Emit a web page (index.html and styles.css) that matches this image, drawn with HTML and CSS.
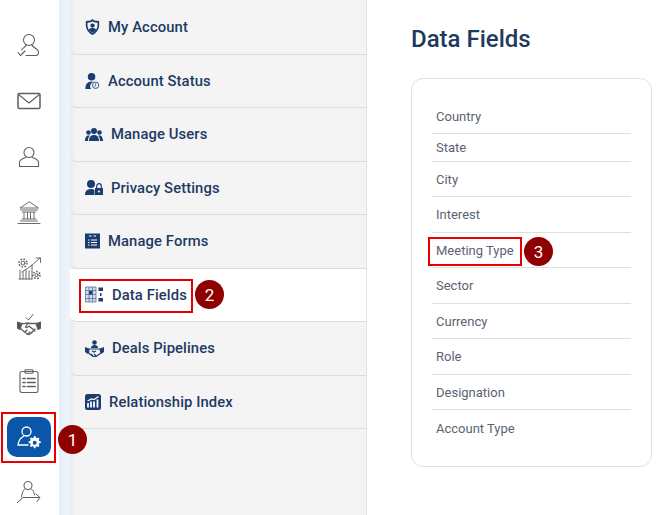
FILE: index.html
```html
<!DOCTYPE html>
<html lang="en">
<head>
<meta charset="utf-8">
<title>Data Fields</title>
<link rel="stylesheet" href="styles.css">
</head>
<body>
<div class="app">
  <nav class="rail">
    <a class="rail-item"><svg viewBox="0 0 24 24" class="ri"><circle cx="12" cy="7" r="5.500"/><path d="M9 12c-.5 2-3 3-4.500 5M15 12c.5 2 4 3 6 5.500 1.500 2.500 0 5-2.500 5H9M1 19.500l2.500 3 4.500-4.500"/></svg></a>
    <a class="rail-item"><svg viewBox="0 0 24 24" class="ri"><rect x="1" y="4.500" width="22" height="15" rx="1.200" stroke-width="1.500"/><path d="M1.500 5.500L12 14l10.500-8.500"/></svg></a>
    <a class="rail-item"><svg viewBox="0 0 24 24" class="ri"><circle cx="12" cy="7.500" r="5"/><path d="M8.500 12.500c-3 1-5.500 2-6 4.500v4.500h19V17c-.5-2.500-3-3.500-6-4.500"/></svg></a>
    <a class="rail-item"><svg viewBox="0 0 24 24" class="ri lt"><path d="M12 1L3 7h18zM3.500 9h17M5.500 11h13M7 11.500v6M10.500 11.500v6M13.500 11.500v6M17 11.500v6M5 18h14M3.500 20h17M1 22.500h22"/></svg></a>
    <a class="rail-item"><svg viewBox="0 0 24 24" class="ri lt"><circle cx="6" cy="6" r="2"/><circle class="teeth" cx="6" cy="6" r="4"/><path d="M3 13v9M6 15v7M9 13v9M12 14v8M15 8v14M2 22h13M5 15l9-6 9-8M19 1h4.500v4.500"/><circle cx="19.500" cy="18" r="1.600"/><circle class="teeth" cx="19.500" cy="18" r="3.500"/></svg></a>
    <a class="rail-item"><svg viewBox="0 0 24 24" class="ri"><path d="M9 4.500l2.500 2.500L16 1.500" stroke-width="1"/><path class="fill" d="M0 9l5 1.500-2 6L0 15zM24 9l-5 1.500 2 6 3-1.500z"/><path d="M5 10.500c2 .5 4-.5 6-.5l2 .5 6 0M4 16l6 5 2 .5 2-1 4-4.500M10.500 11l-2 3c1 1 2.500 .5 3.500-1l6 5M8 19l2-2M11 21l2-2" stroke-width="1.300"/></svg></a>
    <a class="rail-item"><svg viewBox="0 0 24 24" class="ri"><rect x="3" y="2.500" width="18" height="21" rx="2"/><rect x="8" y=".7" width="8" height="3.500" rx=".8"/><path d="M6 9.500h2M10.500 9.500h7.500M6 13.500h2M10.500 13.500h7.500M6 17.500h2M10.500 17.500h7.500" stroke-width="1.700"/></svg></a>
    <a class="rail-item"><span class="tile"><svg viewBox="0 0 24 24" class="ti"><circle cx="9.500" cy="6.500" r="4.500"/><path d="M6.500 11.500C3 13 1.500 16 1 20h10"/><path class="gear" d="M17 11l1.400.1.400 1.500 1.200.6 1.400-.7 1 1-.7 1.400.6 1.200 1.500.4v1.400l-1.500.4-.6 1.200.7 1.400-1 1-1.400-.7-1.200.6-.4 1.500h-1.400l-.4-1.500-1.200-.6-1.400.7-1-1 .7-1.400-.6-1.200-1.500-.4v-1.400l1.500-.4.6-1.200-.7-1.400 1-1 1.400.7 1.200-.6zm.7 4.700a2 2 0 100 4 2 2 0 000-4z"/></svg></span></a>
    <a class="rail-item"><svg viewBox="0 0 24 24" class="ri"><circle cx="11" cy="4.500" r="4"/><path d="M7.500 8C5.500 10 5 13 4.500 16M14.500 8c2 1.500 2.500 3.500 3 6M0 22l6-5.500h16.500M19 13l4 3.500-3 4" stroke-width="1"/></svg></a>
  </nav>
  <div class="rail-edge"></div>
  <aside class="menu">
    <a class="menu-item"><svg viewBox="0 0 15 17" class="mi w15"><path d="M7.500 0l2 1.500 5 .5c.5 6 0 11-7 15C.5 13 0 8 .5 2l5-.5z"/><path class="cut" d="M7.500 2.500l1.500 1 3.800.4c.3 4.500-.5 8-5.300 11-4.800-3-5.600-6.500-5.300-11L6 3.500z"/><circle cx="7.500" cy="7" r="2.300"/><path d="M3.500 12c.5-2 2-2.500 4-2.500s3.500.5 4 2.500c-1 1-2.500 2-4 2.500-1.500-.5-3-1.500-4-2.500z"/></svg><span>My Account</span></a>
    <a class="menu-item"><svg viewBox="0 0 15 17" class="mi w15"><circle cx="6.500" cy="4" r="4"/><path d="M0 17c0-5 2-8 6.500-8 1 0 2 .2 3 .6A4.500 4.500 0 006 17z"/><circle class="ring" cx="10.800" cy="13" r="3.400"/><path class="ringi" d="M10.800 11v2.500l-1 1.200"/></svg><span>Account Status</span></a>
    <a class="menu-item"><svg viewBox="0 0 18 13" class="mi w18"><circle cx="9" cy="3" r="3"/><circle cx="3.500" cy="4.500" r="2.300"/><circle cx="14.500" cy="4.500" r="2.300"/><path d="M4 13c0-4 2-6 5-6s5 2 5 6z"/><path d="M0 13c0-3 1-5.500 3.500-5.500 .5 0 1 .1 1.300.3C3.500 9 3 11 3 13zM18 13c0-3-1-5.500-3.500-5.500-.5 0-1 .1-1.300.3 1.300 1.200 1.800 3.200 1.800 5.200z"/></svg><span>Manage Users</span></a>
    <a class="menu-item"><svg viewBox="0 0 18 15" class="mi w18"><circle cx="6" cy="4" r="4"/><path d="M0 15c0-4 2-6 6-6 1.500 0 2.500 .3 3.500 1v5z"/><path d="M10 8h8v7h-8z"/><path class="lock" d="M11.700 8V6a2.300 2.300 0 014.600 0v2"/><circle class="cut" cx="14" cy="11.500" r="1.100"/></svg><span>Privacy Settings</span></a>
    <a class="menu-item"><svg viewBox="0 0 15 15" class="mi w15"><path d="M0 0h15v15H0z"/><path class="cutline" d="M4 2.500h2.500M8.500 2.500H11M3 6.500h1.500M6 6.500h6M3 9h1.500M6 9h6M3 11.500h1.500M6 11.500h6"/></svg><span>Manage Forms</span></a>
    <a class="menu-item active"><svg viewBox="0 0 19 16" class="mi w19"><path class="tbl" d="M.5.500h10.500v15H.5zM.5 4h10.500M.5 8h10.500M.5 12h10.500M4 .5v15M7.500.5v15"/><path class="sq" d="M4 4.500h3.500V8H4zM13.500 1h4.500v3.500h-4.500zM13.500 11.500h4.500V15h-4.500zM15 6.500h1.500v3H15z"/></svg><span>Data Fields</span></a>
    <a class="menu-item"><svg viewBox="0 0 19 17" class="mi w19"><circle cx="9.500" cy="2.500" r="2.300"/><path d="M6 8c0-2 1.500-3 3.500-3s3.500 1 3.500 3z"/><path d="M0 7l4 1.500L3 14l-3-2zM19 7l-4 1.500 1 5.500 3-2z"/><path class="lock" d="M4 9h11l1 4-5 3.500H8L3.500 13zM7 11l2 1 2-1M6 14l2 2M9 14l2 2" /></svg><span>Deals Pipelines</span></a>
    <a class="menu-item"><svg viewBox="0 0 16 16" class="mi w16"><rect width="16" height="16" rx="2.500"/><path class="cutline wide" d="M3 13.500V9M6 13.500V7.500M9 13.500V7.500M12.500 13.500V5.500"/><path class="cutline" d="M2.500 7l4-2 2.500 .5 4.500-3"/></svg><span>Relationship Index</span></a>
    <i class="callout-box box-2"></i>
    <b class="badge badge-2">2</b>
  </aside>
  <main class="main">
    <h1 class="title">Data Fields</h1>
    <section class="card">
      <ul class="fields">
        <li class="field short-a">Country</li>
        <li class="field short-b">State</li>
        <li class="field">City</li>
        <li class="field tall">Interest</li>
        <li class="field">Meeting Type</li>
        <li class="field tall">Sector</li>
        <li class="field">Currency</li>
        <li class="field tall">Role</li>
        <li class="field">Designation</li>
        <li class="field tall last">Account Type</li>
      </ul>
    </section>
    <i class="callout-box box-3"></i>
    <b class="badge badge-3">3</b>
  </main>
  <i class="callout-box box-1"></i>
  <b class="badge badge-1">1</b>
</div>
</body>
</html>
```

FILE: styles.css
```css
* { box-sizing: border-box; }
html, body { margin: 0; padding: 0; }
body { font-family: Roboto, "Liberation Sans", sans-serif; background: #fff; overflow: hidden; }

.app { position: relative; display: flex; width: 656px; height: 515px; overflow: hidden; }

.rail { width: 59px; flex: none; padding: 17px 1px 0 0; display: flex; flex-direction: column; }
.rail-item { height: 56px; flex: none; display: flex; align-items: center; justify-content: center; }
.ri { width: 24px; height: 24px; fill: none; stroke: #5f5f5f; stroke-width: 1.100; stroke-linecap: round; stroke-linejoin: round; }
.ri.lt { stroke: #5a5a5a; stroke-width: .9; }
.ri .fill { fill: #555; }
.ri .teeth { stroke-width: 1.500; stroke-dasharray: 1.500 1.640; stroke-linecap: butt; }
.tile { width: 44px; height: 40px; border-radius: 10px; background: #0a56a8; display: flex; align-items: center; justify-content: center; }
.ti { width: 24px; height: 24px; fill: none; stroke: #fff; stroke-width: 1.300; stroke-linecap: round; }
.ti .gear { fill: #fff; stroke: none; fill-rule: evenodd; }

.rail-edge { width: 11px; flex: none; background: linear-gradient(90deg, #e6eef8, #f0f4fa); }

.menu { width: 297px; flex: none; padding-top: 1px; background: linear-gradient(90deg, #ebecee, #f4f4f5 7px); border-right: 1px solid #e3e3e3; position: relative; }
.menu-item { height: 53.500px; display: flex; align-items: center; gap: 8px; padding-left: 15px; border-bottom: 1px solid #dcdcdc; border-bottom-left-radius: 6px; color: #1e3a63; font-size: 14.800px; font-weight: 500; letter-spacing: .1px; }
.menu-item.active { background: #fff; }
.mi { flex: none; fill: #1a3c6e; }
.w15 { width: 15px; height: 16px; }
.w16 { width: 16px; height: 16px; }
.w18 { width: 18px; height: 15px; }
.w19 { width: 19px; height: 17px; }
.mi .cut { fill: #f4f4f5; }
.mi .ring { fill: #f4f4f5; stroke: #1a3c6e; stroke-width: .9; }
.mi .ringi { fill: none; stroke: #1a3c6e; stroke-width: .8; }
.mi .cutline { fill: none; stroke: #fff; stroke-width: 1.200; }
.mi .cutline.wide { stroke-width: 1.800; }
.mi .lock { fill: none; stroke: #1a3c6e; stroke-width: 1.200; }
.mi .tbl { fill: #d3dbe6; stroke: #5a739a; stroke-width: .8; }
.mi .sq { fill: #1f3f70; }

.main { flex: 1; position: relative; padding: 24px 0 0 44px; }
.title { margin: 0 0 23px; height: 31px; font-size: 24px; line-height: 31px; font-weight: 500; color: #1f3a5c; }
.card { width: 241px; height: 389px; border: 1px solid #e0e0e0; border-radius: 12px; padding: 21px 20px 0; }
.fields { list-style: none; margin: 0; padding: 0; }
.field { height: 35.500px; border-bottom: 1px solid #dedede; padding-left: 4px; display: flex; align-items: center; font-size: 13px; color: #5a6472; }
.field.short-a { height: 34px; padding-bottom: 1px; }
.field.short-b { height: 27.900px; }
.field.last { border-bottom: 0; }

.callout-box { position: absolute; border: 2px solid #e60000; display: block; }
.box-1 { left: 1px; top: 412px; width: 55px; height: 51px; }
.box-2 { left: 9px; top: 279px; width: 114px; height: 34px; }
.box-3 { left: 61px; top: 237px; width: 94px; height: 29px; }
.badge { position: absolute; width: 29px; height: 29px; border-radius: 50%; background: #8f0000; color: #fff; font-size: 17px; font-weight: 400; display: flex; align-items: center; justify-content: center; }
.badge-1 { left: 58px; top: 425px; }
.badge-2 { left: 125px; top: 280px; }
.badge-3 { left: 157px; top: 237px; }
```
